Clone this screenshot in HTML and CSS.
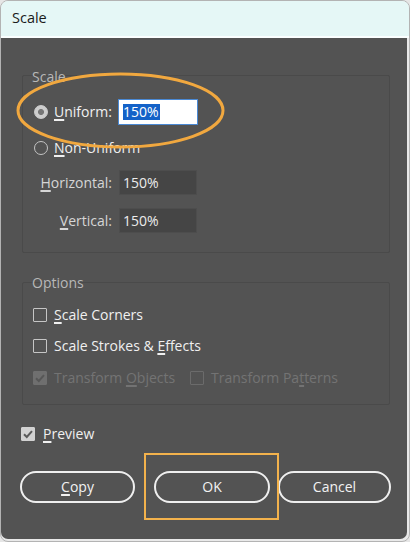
FILE: index.html
```html
<!DOCTYPE html>
<html>
<head>
<meta charset="utf-8">
<link rel="stylesheet" href="styles.css">
</head>
<body>
<div class="window">
  <div class="titlebar">Scale</div>
  <div class="panel">
    <div class="group group-scale">
      <div class="legend">Scale</div>
      <div class="row row-uniform">
        <span class="radio radio-on"></span>
        <span class="lbl lbl-uniform"><u>U</u>niform:</span>
        <span class="field field-active"><span class="sel">150%</span></span>
      </div>
      <div class="row row-nonuniform">
        <span class="radio"></span>
        <span class="lbl"><u>N</u>on-Uniform</span>
      </div>
      <div class="row row-h">
        <span class="lbl lbl-axis"><u>H</u>orizontal:</span>
        <span class="field">150%</span>
      </div>
      <div class="row row-v">
        <span class="lbl lbl-axis"><u>V</u>ertical:</span>
        <span class="field">150%</span>
      </div>
    </div>

    <div class="group group-options">
      <div class="legend">Options</div>
      <div class="row crow crow-1">
        <span class="check"></span>
        <span class="lbl"><u>S</u>cale Corners</span>
      </div>
      <div class="row crow crow-2">
        <span class="check"></span>
        <span class="lbl">Scale Strokes &amp; <u>E</u>ffects</span>
      </div>
      <div class="row crow crow-3">
        <span class="citem citem-first">
          <span class="check check-disabled"><svg viewBox="0 0 14 14" width="14" height="14"><path d="M3 7.2 L5.8 10 L11 4.2" fill="none" stroke="#575757" stroke-width="2"/></svg></span>
          <span class="lbl lbl-disabled">Transform <u>O</u>bjects</span>
        </span>
        <span class="citem">
          <span class="check check-disabled-empty"></span>
          <span class="lbl lbl-disabled">Transform Pa<u>t</u>terns</span>
        </span>
      </div>
    </div>

    <div class="row preview">
      <span class="check check-on"><svg viewBox="0 0 14 14" width="14" height="14"><path d="M3 7.2 L5.8 10 L11 4.2" fill="none" stroke="#5a5a5a" stroke-width="2"/></svg></span>
      <span class="lbl"><u>P</u>review</span>
    </div>

    <div class="buttons">
      <div class="btn btn-copy"><span><u>C</u>opy</span></div>
      <div class="btn btn-ok"><span>OK</span></div>
      <div class="btn btn-cancel"><span>Cancel</span></div>
    </div>
  </div>

  <svg class="mark-ellipse" width="210" height="80" viewBox="0 0 210 80">
    <ellipse cx="104.5" cy="38.5" rx="102.5" ry="36.5" fill="none" stroke="#f1a83f" stroke-width="3"/>
  </svg>
  <div class="mark-rect"></div>
</div>
</body>
</html>
```

FILE: styles.css
```css
html, body {
  margin: 0;
  padding: 0;
  background: #e6e6e6;
}

body {
  font-family: "Open Sans", "Liberation Sans", sans-serif;
  font-size: 14px;
  line-height: 20px;
}

.window {
  position: relative;
  width: 410px;
  height: 542px;
  box-sizing: border-box;
  border: 1px solid #b3b3b3;
  border-radius: 8px;
  background: #e9e9e9;
  overflow: hidden;
}

.titlebar {
  box-sizing: border-box;
  padding: 6px 0 0 11px;
  background: #e5f7f6;
  border-bottom: 2px solid #fbffff;
  height: 37px;
  color: #1a1a1a;
  font-size: 14.5px;
  line-height: 22px;
}

.panel {
  background: #535353;
  height: 501px;
  margin-right: 2px;
  border-radius: 0 0 7px 7px;
  padding-top: 37px;
  box-sizing: border-box;
  color: #f0f0f0;
}

u {
  text-decoration: underline;
  text-decoration-thickness: 2px;
  text-underline-offset: 2px;
}

.group {
  margin-left: 21px;
  width: 368px;
  box-sizing: border-box;
  border: 1px solid #4a4a4a;
  border-radius: 2px;
}

.legend {
  color: #b8b8b8;
  padding-left: 9px;
  height: 20px;
}

.group-scale .legend { margin-top: -9px; }
.group-scale { padding-bottom: 19px; }

.row {
  display: flex;
  align-items: center;
}

.row-uniform { margin-top: 12px; height: 26px; padding-left: 11px; }
.row-nonuniform { margin-top: 10px; height: 26px; padding-left: 11px; }
.row-h { margin-top: 9px; height: 25px; }
.row-v { margin-top: 13px; height: 25px; }

.radio {
  width: 14px;
  height: 14px;
  box-sizing: border-box;
  border-radius: 50%;
  border: 1.5px solid #c4c4c4;
  margin-right: 6px;
  flex: none;
}

.radio-on {
  background: radial-gradient(circle, #767676 0, #767676 2.6px, #cdcdcd 3.4px);
  border-color: #cdcdcd;
}

.lbl { white-space: nowrap; }

.lbl-uniform { width: 64px; }

.lbl-axis {
  width: 96px;
  box-sizing: border-box;
  padding-right: 7px;
  text-align: right;
  color: #d6d6d6;
}

.field {
  width: 78px;
  height: 25px;
  box-sizing: border-box;
  background: #454545;
  border: 1px solid #4d4d4d;
  padding-left: 3px;
  color: #ececec;
  line-height: 23px;
}

.field-active {
  width: 80px;
  height: 26px;
  background: #ffffff;
  border: 1px solid #4a89d4;
  padding-left: 4px;
  display: flex;
  align-items: center;
}

.sel {
  background: #1462c8;
  color: #ffffff;
  line-height: 16px;
  height: 16px;
  padding-right: 1px;
}

.group-options { margin-top: 29px; padding-bottom: 16px; }
.group-options .legend { margin-top: -10px; }

.crow { height: 20px; padding-left: 10px; }
.crow-1 { margin-top: 12px; }
.crow-2 { margin-top: 11px; }
.crow-3 { margin-top: 12px; }

.check {
  width: 14px;
  height: 14px;
  box-sizing: border-box;
  border: 1.5px solid #c6c6c6;
  border-radius: 1px;
  margin-right: 7px;
  flex: none;
  display: block;
}

.check svg { display: block; margin: -1.5px; }

.check-disabled {
  background: #6f6f6f;
  border-color: #6f6f6f;
}

.check-disabled-empty {
  border-color: #6b6b6b;
}

.lbl-disabled { color: #737373; }

.citem {
  display: flex;
  align-items: center;
}

.citem-first { width: 157px; }

.preview {
  margin-top: 19px;
  height: 20px;
  padding-left: 20px;
}

.check-on {
  background: #d2d2d2;
  border-color: #d2d2d2;
  margin-right: 8px;
}

.buttons {
  display: flex;
  margin-top: 27px;
}

.btn {
  height: 32px;
  box-sizing: border-box;
  border: 2px solid #efefef;
  border-radius: 16px;
  display: flex;
  align-items: center;
  justify-content: center;
  color: #f2f2f2;
}

.btn-copy { margin-left: 19px; width: 115px; }
.btn-ok { margin-left: 19px; width: 116px; }
.btn-cancel { margin-left: 8px; width: 113px; }

.mark-ellipse {
  position: absolute;
  left: 15px;
  top: 71px;
}

.mark-rect {
  position: absolute;
  left: 143px;
  top: 452px;
  width: 135px;
  height: 67px;
  box-sizing: border-box;
  border: 2.5px solid #f3b24c;
}
```
